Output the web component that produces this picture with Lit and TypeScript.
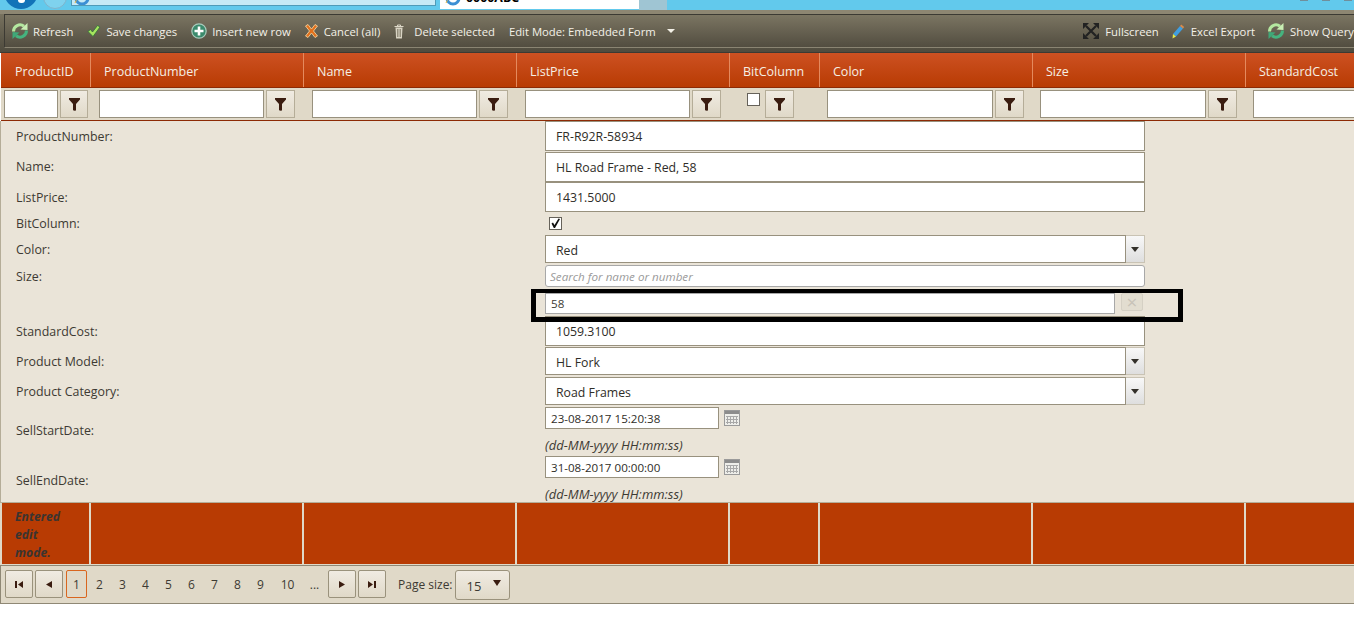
import { LitElement, html, css } from "lit";
import { customElement } from "lit/decorators.js";

const refresh = html`<svg class="ic" viewBox="0 0 18 18" width="18" height="18">
  <path d="M2.500 9.500A6.500 6.500 0 0 1 13 4.300" fill="none" stroke="#b4e8a0" stroke-width="3"/>
  <path d="M9.500 7.500L16.500 8V1z" fill="#c9efb4"/>
  <path d="M15.500 8.500A6.500 6.500 0 0 1 5 13.700" fill="none" stroke="#45b37f" stroke-width="3"/>
  <path d="M8.500 10.500L1.500 10v7z" fill="#3fa878"/>
</svg>`;
const check = html`<svg class="ic" viewBox="0 0 14 14" width="14" height="14"><path d="M1 7.500l2.500-2 2 2.500L10.500 1.500l2.500 1.500-7 9.500z" fill="#a6e45e" stroke="#2f6f3a" stroke-width=".8"/></svg>`;
const plus = html`<svg class="ic" viewBox="0 0 16 16" width="16" height="16"><circle cx="8" cy="8" r="7.200" fill="#3b8a6c" stroke="#a9cbbd" stroke-width="1.200"/><path d="M8 3.500v9M3.500 8h9" stroke="#fff" stroke-width="2.600"/></svg>`;
const cancel = html`<svg class="ic" viewBox="0 0 13 14" width="13" height="14"><path d="M.5 2L3 .5l3.500 4.500L10 .5 12.500 2 8.500 7l4 5-2.500 1.500L6.500 9 3 13.500.5 12l4-5z" fill="#e2701c" stroke="#f7dca8" stroke-width=".8"/></svg>`;
const trash = html`<svg class="ic" viewBox="0 0 10 15" width="10" height="15"><path d="M.5 2.500h9M3.500 2.500V1h3v1.500" stroke="#ddd8c8" fill="none"/><path d="M1.500 3.500h7l-.6 11H2.100z" fill="#d9d4c4"/><path d="M3.500 5v8M5 5v8M6.500 5v8" stroke="#77715f" stroke-width=".7"/></svg>`;
const fullscreen = html`<svg class="ic" viewBox="0 0 16 16" width="16" height="16"><path d="M3 3l10 10M13 3L3 13" stroke="#222" stroke-width="2.200"/><path d="M0 0h6L0 6zM16 0v6l-6-6zM0 16v-6l6 6zM16 16h-6l6-6z" fill="#222"/></svg>`;
const pencil = html`<svg class="ic" viewBox="0 0 14 16" width="14" height="16"><path d="M2 11l7-8 3 2.500-7 8z" fill="#3f9ee0"/><path d="M2 11l3 2.500-3.500 2z" fill="#e6e84a"/><path d="M9 3l1.200-1.500 3 2.500L12 5.500z" fill="#d98a4a"/></svg>`;
const funnel = html`<svg viewBox="0 0 11 13" width="11" height="13"><path d="M0 0h11v1.500L7 6v6.500L5 12.800 4 12V6L0 1.500z" fill="#3a1c10"/></svg>`;
const cal = html`<svg viewBox="0 0 16 16" width="16" height="16"><rect x=".5" y=".5" width="15" height="15" fill="#eeeeea" stroke="#9a9a9a"/><rect x="1" y="1" width="14" height="3" fill="#8c8c8c"/><path d="M3.500 6v8M6.500 6v8M9.500 6v8M12.500 6v8M2 6.500h12M2 9.500h12M2 12.500h12" stroke="#a8a8a8" stroke-width="1"/></svg>`;
const tick = html`<svg viewBox="0 0 11 11" width="11" height="11"><path d="M1.500 5.500l1.500-1 1.500 2.500L8.500 .5l1.500.5L5 10H3.800z" fill="#111"/></svg>`;
const ieIcon = html`<svg viewBox="0 0 16 16" width="16" height="16"><circle cx="8" cy="8" r="6" fill="none" stroke="#3b8fd4" stroke-width="3"/><path d="M1 13C4 6 10 2 15 1" fill="none" stroke="#e8b23a" stroke-width="1"/></svg>`;
const tri = (dir: string) => {
  const p: Record<string, string> = {
    first: "M0 0h2v7H0zM8 0v7L3 3.500z",
    prev: "M7 0v7L1 3.500z",
    next: "M1 0v7l6-3.500z",
    last: "M0 0v7l5-3.500zM6 0h2v7H6z",
  };
  return html`<svg viewBox="0 0 8 7" width="8" height="7"><path d=${p[dir]} fill="#3a1c10"/></svg>`;
};

const cols: [string, number][] = [
  ["ProductID", 90],
  ["ProductNumber", 213],
  ["Name", 213],
  ["ListPrice", 213],
  ["BitColumn", 90],
  ["Color", 213],
  ["Size", 213],
  ["StandardCost", 213],
];
const footCols = [87, 211, 211, 211, 88, 211, 211, 211];

@customElement("app-root")
export class AppRoot extends LitElement {
  static styles = css`
    :host {
      display: block;
      width: 1354px;
      height: 617px;
      overflow: hidden;
      background: #fff;
      font-family: "Open Sans", "Noto Sans", sans-serif;
      font-size: 12.4px;
      color: #3d3a33;
      position: relative;
    }
    .chrome {
      height: 10px;
      background: #62c9ec;
      display: flex;
      overflow: hidden;
    }
    .back {
      width: 34px;
      height: 34px;
      border-radius: 50%;
      background: #1273b8;
      margin: -25px 0 0 4px;
      flex: none;
      display: flex;
      align-items: flex-end;
      justify-content: center;
    }
    .back i {
      width: 7px;
      height: 4px;
      margin-bottom: 6px;
      background: #fff;
      border-radius: 0 0 3px 3px;
    }
    .fwd {
      width: 24px;
      height: 24px;
      box-sizing: border-box;
      border-radius: 50%;
      border: 1px solid #7fb4cc;
      background: #7fd2ee;
      margin: -15px 0 0 5px;
      flex: none;
    }
    .addr {
      width: 365px;
      height: 6px;
      margin-left: 4px;
      background: #c6eaf6;
      border: 1px solid #4f9bb8;
      border-top: 0;
      box-sizing: border-box;
      flex: none;
      overflow: hidden;
    }
    .addr svg {
      display: block;
      margin: -10px 0 0 2px;
    }
    .tabx {
      width: 199px;
      height: 9px;
      margin-left: 4px;
      background: #fff;
      flex: none;
      display: flex;
      gap: 5px;
      padding-left: 5px;
      box-sizing: border-box;
      overflow: hidden;
    }
    .tabx svg {
      flex: none;
      margin-top: -10px;
    }
    .tabx span {
      flex: none;
      margin-top: -10px;
      line-height: 16px;
      color: #000;
      font-weight: 700;
    }
    .tabg {
      width: 28px;
      height: 10px;
      background: #9fc5d3;
      flex: none;
    }
    .win {
      display: flex;
      margin-left: auto;
      gap: 14px;
      padding-right: 2px;
    }
    .win i {
      width: 8px;
      height: 1px;
      background: #6f8f9c;
    }
    .band {
      height: 4px;
      background: #8d8672;
    }
    .bar {
      height: 39px;
      box-sizing: border-box;
      padding: 0 0 4px 4px;
      background: linear-gradient(#78725f, #4f4b3e);
      border-bottom: 1px solid #3c3a33;
    }
    .box {
      height: 34px;
      box-sizing: border-box;
      border: 1px solid #3c3a33;
      border-right: 0;
      border-bottom-color: #8a8472;
      background: linear-gradient(#7b7562, #524d40);
      color: #f4f1e8;
      display: flex;
      align-items: center;
      padding-left: 6px;
      white-space: nowrap;
      font-size: 11.3px;
    }
    .tbtn {
      display: flex;
      align-items: center;
      margin-right: 14px;
      flex: none;
    }
    .tbtn.tight {
      margin-right: 12px;
    }
    .tbtn.end {
      margin-right: 0;
    }
    .ic {
      flex: none;
      margin-right: 5px;
    }
    .g4 .ic {
      margin-right: 4px;
    }
    .g6 .ic {
      margin-right: 6px;
    }
    .g10 .ic {
      margin-right: 10px;
    }
    .spacer {
      flex: 1;
    }
    .caret {
      width: 0;
      height: 0;
      border: 4.500px solid transparent;
      border-top: 4.500px solid #f4f1e8;
      border-bottom: 0;
      margin-left: 11px;
    }
    .hdr {
      display: flex;
      height: 34px;
      margin-left: 1px;
      background: linear-gradient(#cd5122, #b83b03);
      color: #f6efe4;
      font-size: 12.500px;
    }
    .hc {
      flex: none;
      box-sizing: border-box;
      border-right: 1px solid #e48a5e;
      padding: 10px 0 0 13px;
    }
    .hc:first-child {
      padding-left: 14px;
    }
    .filter {
      display: flex;
      height: 34px;
      box-sizing: border-box;
      margin-left: 1px;
      background: #e0d9c8;
      border-top: 1px solid #8d2a05;
      border-bottom: 1px solid #8d2a05;
      padding-top: 2px;
    }
    .fc {
      flex: none;
      display: flex;
      align-items: flex-start;
      gap: 2px;
      padding-left: 8px;
      box-sizing: border-box;
    }
    .fc:first-child {
      padding-left: 3px;
    }
    .fc.wide {
      padding-left: 7px;
    }
    .fc.bit {
      padding-left: 17px;
      gap: 5px;
    }
    .fi {
      flex: none;
      width: 165px;
      height: 28px;
      background: #fff;
      border: 1px solid #98917e;
      box-sizing: border-box;
    }
    .wide .fi {
      width: 166px;
    }
    .fc:first-child .fi {
      width: 54px;
    }
    .fb {
      flex: none;
      width: 29px;
      height: 28px;
      box-sizing: border-box;
      border: 1px solid #b5ad98;
      background: linear-gradient(#f0ebe2, #e0d9c8);
      display: flex;
      align-items: center;
      justify-content: center;
    }
    .fc:first-child .fb {
      width: 28px;
    }
    .cb {
      flex: none;
      width: 13px;
      height: 13px;
      background: #fff;
      border: 1px solid #66625a;
      box-sizing: border-box;
      display: flex;
      align-items: center;
      justify-content: center;
    }
    .bit .cb {
      margin-top: 3px;
    }
    .form {
      height: 381px;
      box-sizing: border-box;
      background: #eae4d8;
      border-left: 1px solid #b5ad98;
      display: grid;
      grid-template-columns: 544px 600px;
      align-content: start;
      overflow: hidden;
    }
    .lab {
      padding-left: 15px;
      line-height: 16px;
      box-sizing: border-box;
    }
    .val {
      display: flex;
      flex-direction: column;
    }
    .inp {
      box-sizing: border-box;
      height: 30px;
      background: #fff;
      border: 1px solid #98917e;
      padding-left: 10px;
      display: flex;
      align-items: center;
      color: #2f2d28;
      font-size: 12.3px;
    }
    .cost {
      margin-top: 1px;
      height: 30px;
    }
    .combo {
      display: flex;
      height: 28px;
    }
    .combo .inp {
      flex: 1;
      height: 28px;
      padding-top: 2px;
    }
    .arrow {
      flex: none;
      width: 19px;
      box-sizing: border-box;
      border: 1px solid #c9c3b4;
      border-left: 0;
      background: linear-gradient(#f8f8f8, #dedede);
      display: flex;
      align-items: center;
      justify-content: center;
    }
    .arrow i {
      width: 0;
      height: 0;
      border: 4.500px solid transparent;
      border-top: 5px solid #33302a;
      border-bottom: 0;
    }
    .check {
      padding: 3px 0 0 4px;
    }
    .search {
      box-sizing: border-box;
      height: 22px;
      background: #fff;
      border: 1px solid #a8a8a8;
      border-radius: 3px;
      padding-left: 4px;
      font-style: italic;
      font-size: 11.650px;
      color: #9a9a9a;
      display: flex;
      align-items: center;
    }
    .tok {
      display: flex;
      gap: 6px;
      height: 21px;
      margin-top: 6px;
    }
    .tok .t {
      width: 570px;
      box-sizing: border-box;
      background: #fff;
      border: 1px solid #a8a8a8;
      padding-left: 5px;
      display: flex;
      align-items: center;
      flex: none;
      font-size: 11.600px;
    }
    .tok .x {
      flex: none;
      width: 22px;
      height: 18px;
      box-sizing: border-box;
      border: 1px solid #d5d0c4;
      border-radius: 2px;
      background: #e2ddd0;
      color: #c8c3b8;
      display: flex;
      align-items: center;
      justify-content: center;
      font-size: 19px;
      line-height: 1;
    }
    .date {
      display: flex;
      align-items: center;
      gap: 5px;
      height: 22px;
    }
    .date .inp {
      width: 174px;
      height: 22px;
      padding-left: 5px;
      flex: none;
      font-size: 11.600px;
    }
    .hint {
      font-style: italic;
      font-size: 13px;
      line-height: 16px;
      margin-top: 8px;
    }
    .foot {
      display: flex;
      height: 63px;
      box-sizing: border-box;
      background: #e0d9c8;
      padding: 0 0 1px 2px;
      gap: 2px;
      border-top: 1px solid #b5ad98;
    }
    .fo {
      flex: none;
      background: #b83b03;
    }
    .em {
      font-size: 12.2px;
      font-style: italic;
      font-weight: 700;
      line-height: 18px;
      padding: 5px 0 0 13px;
      box-sizing: border-box;
      color: #3a3430;
    }
    .pager {
      height: 39px;
      box-sizing: border-box;
      background: #e0d9c8;
      border: 1px solid #8f8875;
      border-right: 0;
      display: flex;
      align-items: center;
      padding: 0 0 1px 4px;
      font-size: 12px;
    }
    .pb {
      box-sizing: border-box;
      height: 28px;
      width: 28px;
      border: 1px solid #9a927c;
      border-radius: 2px;
      background: linear-gradient(#f0ebe2, #e0d9c8);
      display: flex;
      align-items: center;
      justify-content: center;
      flex: none;
      margin-left: 2px;
    }
    .pb.start {
      margin-left: 0;
    }
    .num {
      flex: none;
      width: 23px;
      text-align: center;
    }
    .num.wide {
      width: 31px;
    }
    .cur {
      box-sizing: border-box;
      width: 21px;
      height: 28px;
      border: 1px solid #d9661f;
      border-radius: 2px;
      display: flex;
      align-items: center;
      justify-content: center;
      flex: none;
      margin: 0 1px 0 3px;
    }
    .ps-label {
      margin-left: 12px;
      flex: none;
    }
    .ps {
      box-sizing: border-box;
      width: 55px;
      height: 30px;
      margin: 1px 0 0 2px;
      border: 1px solid #9a927c;
      border-radius: 3px;
      background: linear-gradient(#f0ebe2, #e0d9c8);
      display: flex;
      align-items: center;
      justify-content: space-between;
      padding: 2px 8px 0 11px;
      flex: none;
      font-size: 13px;
    }
    .ps i {
      width: 0;
      height: 0;
      border: 4px solid transparent;
      border-top: 6px solid #3a1c10;
      border-bottom: 0;
      margin-bottom: 5px;
    }
    .mark {
      position: absolute;
      left: 531px;
      top: 289px;
      width: 652px;
      height: 33px;
      box-sizing: border-box;
      border: 5px solid #000;
      border-top-width: 4px;
    }
  `;

  private row(label: string, h: number, pad: number, content: unknown) {
    return html`<div class="lab" style="height:${h}px;padding-top:${pad}px">${label}</div>
      <div class="val" style="height:${h}px">${content}</div>`;
  }

  private combo(text: string) {
    return html`<div class="combo"><div class="inp">${text}</div><div class="arrow"><i></i></div></div>`;
  }

  private date(text: string) {
    return html`<div class="date"><div class="inp">${text}</div>${cal}</div>
      <div class="hint">(dd-MM-yyyy HH:mm:ss)</div>`;
  }

  render() {
    const nums = ["2", "3", "4", "5", "6", "7", "8", "9"];
    return html`
      <div class="chrome">
        <div class="back"><i></i></div>
        <div class="fwd"></div>
        <div class="addr">${ieIcon}</div>
        <div class="tabx">${ieIcon}<span>0000ABC</span></div>
        <div class="tabg"></div>
        <div class="win"><i></i><i></i><i></i></div>
      </div>
      <div class="band"></div>
      <div class="bar">
        <div class="box">
          <span class="tbtn g4">${refresh}Refresh</span>
          <span class="tbtn">${check}Save changes</span>
          <span class="tbtn">${plus}Insert new row</span>
          <span class="tbtn g6">${cancel}Cancel (all)</span>
          <span class="tbtn g10">${trash}Delete selected</span>
          <span class="tbtn">Edit Mode: Embedded Form<i class="caret"></i></span>
          <span class="spacer"></span>
          <span class="tbtn g6 tight">${fullscreen}Fullscreen</span>
          <span class="tbtn g6 tight">${pencil}Excel Export</span>
          <span class="tbtn end">${refresh}Show Query</span>
        </div>
      </div>
      <div class="hdr">
        ${cols.map(([n, w]) => html`<div class="hc" style="width:${w}px">${n}</div>`)}
      </div>
      <div class="filter">
        ${cols.map(([n, w], i) =>
          n === "BitColumn"
            ? html`<div class="fc bit" style="width:${w}px"><span class="cb"></span><span class="fb">${funnel}</span></div>`
            : html`<div class="fc ${i > 4 ? "wide" : ""}" style="width:${w}px"><span class="fi"></span><span class="fb">${funnel}</span></div>`
        )}
      </div>
      <div class="form">
        ${this.row("ProductNumber:", 31, 8, html`<div class="inp">FR-R92R-58934</div>`)}
        ${this.row("Name:", 30, 7, html`<div class="inp">HL Road Frame - Red, 58</div>`)}
        ${this.row("ListPrice:", 32, 8, html`<div class="inp">1431.5000</div>`)}
        ${this.row("BitColumn:", 21, 2, html`<div class="check"><span class="cb">${tick}</span></div>`)}
        ${this.row("Color:", 30, 7, this.combo("Red"))}
        ${this.row("Size:", 50, 4, html`<div class="search">Search for name or number</div>
          <div class="tok"><div class="t">58</div><div class="x">×</div></div>`)}
        ${this.row("StandardCost:", 32, 9, html`<div class="inp cost">1059.3100</div>`)}
        ${this.row("Product Model:", 30, 7, this.combo("HL Fork"))}
        ${this.row("Product Category:", 30, 7, this.combo("Road Frames"))}
        ${this.row("SellStartDate:", 49, 16, this.date("23-08-2017 15:20:38"))}
        ${this.row("SellEndDate:", 46, 17, this.date("31-08-2017 00:00:00"))}
      </div>
      <div class="foot">
        ${footCols.map(
          (w, i) =>
            html`<div class="fo ${i === 0 ? "em" : ""}" style="width:${w}px">${i === 0 ? html`Entered<br />edit<br />mode.` : ""}</div>`
        )}
      </div>
      <div class="pager">
        <span class="pb start">${tri("first")}</span>
        <span class="pb">${tri("prev")}</span>
        <span class="cur">1</span>
        ${nums.map((n) => html`<span class="num">${n}</span>`)}
        <span class="num wide">10</span>
        <span class="num">...</span>
        <span class="pb">${tri("next")}</span>
        <span class="pb">${tri("last")}</span>
        <span class="ps-label">Page size:</span>
        <span class="ps">15<i></i></span>
      </div>
      <div class="mark"></div>
    `;
  }
}
